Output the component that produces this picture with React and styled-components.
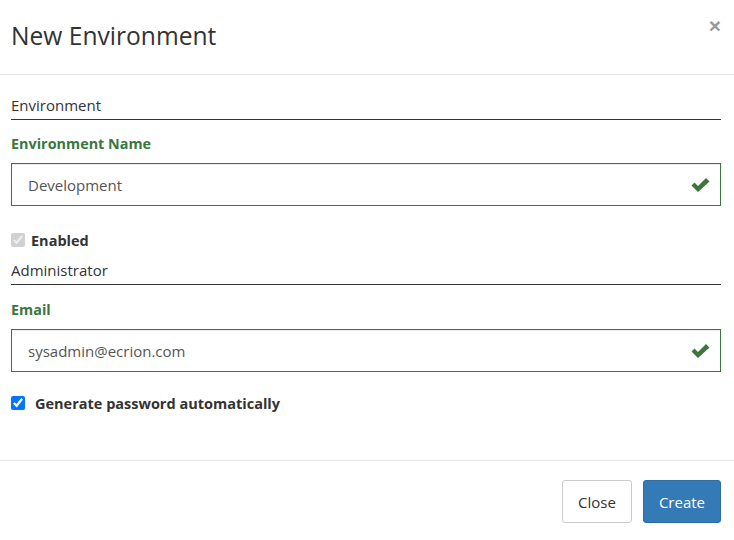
import React from "react";
import styled, { createGlobalStyle } from "styled-components";

const Global = createGlobalStyle`
  html, body { margin: 0; padding: 0; background: #fff; }
  body { font-family: "Open Sans", "Noto Sans", sans-serif; color: #333; font-size: 14px; }
  * { box-sizing: border-box; }
`;

const Modal = styled.div`
  width: 734px;
  height: 540px;
  display: flex;
  flex-direction: column;
  background: #fff;
`;

const Header = styled.div`
  height: 75px;
  flex: none;
  display: flex;
  align-items: center;
  justify-content: space-between;
  padding: 0 13px 3px 11px;
  border-bottom: 1px solid #e5e5e5;
`;

const Title = styled.h4`
  margin: 0;
  font-size: 24.6px;
  font-weight: 400;
  line-height: 34px;
  color: #333;
`;

const CloseX = styled.button`
  border: 0;
  background: transparent;
  padding: 0;
  margin: 0 0 20px 0;
  font-size: 21px;
  font-weight: 700;
  line-height: 1;
  color: #000;
  opacity: 0.4;
  cursor: pointer;
  font-family: "Liberation Sans", sans-serif;
`;

const Body = styled.div`
  flex: 1;
  padding: 19px 13px 0 11px;
  display: flex;
  flex-direction: column;
`;

const Legend = styled.div`
  font-size: 15px;
  line-height: 22px;
  padding-bottom: 3px;
  color: #333;
  border-bottom: 1px solid #333;
  margin-top: ${(p) => p.$mt || 0}px;
`;

const Label = styled.label`
  display: block;
  font-weight: 700;
  font-size: 14.4px;
  line-height: 20px;
  color: #3c763d;
  margin-top: ${(p) => p.$mt || 0}px;
  margin-bottom: 9px;
`;

const InputWrap = styled.div`
  position: relative;
  height: 43px;
`;

const Input = styled.input`
  width: 100%;
  height: 43px;
  border: 1px solid #3c763d;
  border-radius: 0;
  padding: 0 40px 0 16px;
  font-family: inherit;
  font-size: 15px;
  color: #555;
  outline: none;
  box-shadow: inset 0 1px 1px rgba(0, 0, 0, 0.075);
`;

const Feedback = styled.svg`
  position: absolute;
  right: 11px;
  top: 14px;
  width: 19px;
  height: 15px;
`;

const CheckRow = styled.label`
  display: flex;
  align-items: center;
  gap: ${(p) => p.$gap}px;
  margin-top: ${(p) => p.$mt}px;
  height: 20px;
  font-weight: 700;
  font-size: 14.5px;
  color: #333;
`;

const Box = styled.input`
  margin: 0;
  width: 14px;
  height: 14px;
  flex: none;
`;

const Footer = styled.div`
  flex: none;
  height: 80px;
  border-top: 1px solid #e5e5e5;
  display: flex;
  justify-content: flex-end;
  align-items: flex-start;
  gap: 11px;
  padding: 19px 13px 0 11px;
`;

const Button = styled.button`
  height: 43px;
  padding: 0 15px;
  font-family: inherit;
  font-size: 15px;
  border-radius: 3px;
  border: 1px solid ${(p) => (p.$primary ? "#2e6da4" : "#ccc")};
  background: ${(p) => (p.$primary ? "#337ab7" : "#fff")};
  color: ${(p) => (p.$primary ? "#fff" : "#333")};
  cursor: pointer;
`;

const Check = () => (
  <Feedback viewBox="0 0 19 15">
    <path d="M0.5 8.5 L3.5 5.5 L7 9 L15 1 L18.5 4.5 L7 15 Z" fill="#3c763d" />
  </Feedback>
);

export default function App() {
  return (
    <>
      <Global />
      <Modal>
        <Header>
          <Title>New Environment</Title>
          <CloseX aria-label="Close">×</CloseX>
        </Header>
        <Body>
          <Legend>Environment</Legend>
          <Label $mt={14}>Environment Name</Label>
          <InputWrap>
            <Input defaultValue="Development" />
            <Check />
          </InputWrap>
          <CheckRow $gap={6} $mt={24}>
            <Box type="checkbox" checked disabled readOnly />
            Enabled
          </CheckRow>
          <Legend $mt={9}>Administrator</Legend>
          <Label $mt={15}>Email</Label>
          <InputWrap>
            <Input defaultValue="sysadmin@ecrion.com" />
            <Check />
          </InputWrap>
          <CheckRow $gap={10} $mt={21}>
            <Box type="checkbox" defaultChecked />
            Generate password automatically
          </CheckRow>
        </Body>
        <Footer>
          <Button>Close</Button>
          <Button $primary>Create</Button>
        </Footer>
      </Modal>
    </>
  );
}
